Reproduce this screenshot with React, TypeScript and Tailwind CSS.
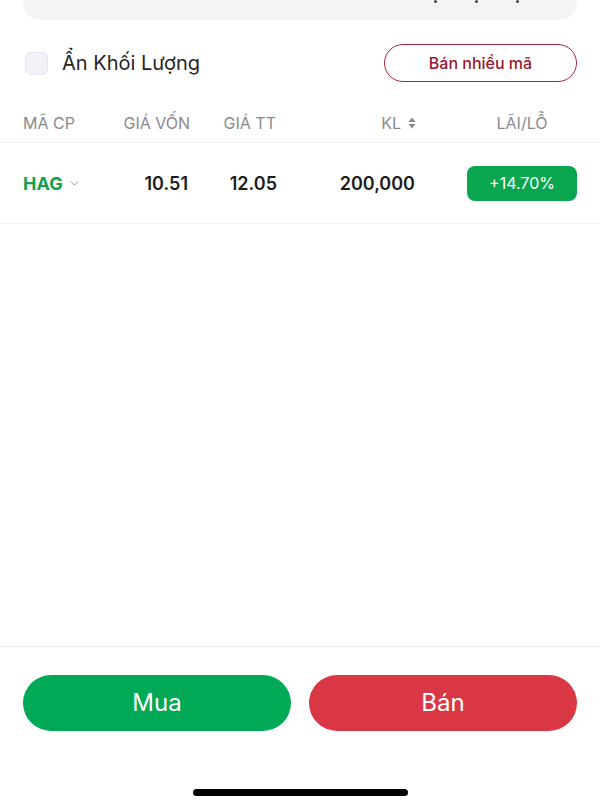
import { ChevronDown } from "lucide-react";

const cols = "grid grid-cols-[97px_70px_87px_143px_1fr_110px]";

export default function App() {
  return (
    <div className="w-[600px] h-[800px] bg-white flex flex-col overflow-hidden font-['Inter',sans-serif] text-[#1c1c1e]">
      {/* summary card, scrolled mostly off the top */}
      <div className="mx-[23px] -mt-[30px] h-[50px] rounded-b-[18px] bg-[#f4f4f6] flex justify-end items-start gap-[38px] pr-[58px] pt-[30px]">
        <span className="w-[3px] h-[3px] rounded-full bg-[#444]" />
        <span className="w-[3px] h-[3px] rounded-full bg-[#444]" />
        <span className="w-[3px] h-[3px] rounded-full bg-[#444]" />
      </div>

      {/* hide volume + sell many */}
      <div className="mt-[24px] px-[23px] flex items-center justify-between">
        <label className="flex items-center gap-[14px] ml-[2px]">
          <span className="w-[23px] h-[23px] rounded-[6px] bg-[#f1f1f8] border border-[#e4e4ec]" />
          <span className="text-[20px] text-[#262626]">Ẩn Khối Lượng</span>
        </label>
        <button className="w-[193px] h-[38px] rounded-full border-[1.5px] border-[#a3283c] text-[#94192d] text-[16px] font-medium">
          Bán nhiều mã
        </button>
      </div>

      {/* table header */}
      <div className={`${cols} items-end px-[23px] h-[61px] pb-[7px] text-[16px] text-[#8a8a8e] border-b border-[#f0f0f2]`}>
        <span>MÃ CP</span>
        <span className="text-right">GIÁ VỐN</span>
        <span className="text-right pr-[1px]">GIÁ TT</span>
        <span className="flex items-center justify-end gap-[7px] pr-[4px]">
          KL
          <svg width="8" height="12" viewBox="0 0 8 12" fill="#8a8a8e">
            <path d="M4 0.5 7.5 5H0.5Z" />
            <path d="M4 11.5 7.5 7H0.5Z" />
          </svg>
        </span>
        <span />
        <span className="text-center">LÃI/LỖ</span>
      </div>

      {/* row */}
      <div className={`${cols} items-center px-[23px] h-[81px] border-b border-[#f3f3f5]`}>
        <span className="flex items-center gap-[5px] text-[18px] font-bold text-[#12a150]">
          HAG
          <ChevronDown size={13} strokeWidth={1.6} className="text-[#8a8a8e] mt-[1px]" />
        </span>
        <span className="text-right text-[18px] font-semibold pr-[2px]">10.51</span>
        <span className="text-right text-[18px] font-semibold">12.05</span>
        <span className="text-right text-[18px] font-semibold pr-[5px]">200,000</span>
        <span />
        <span className="h-[35px] rounded-[8px] bg-[#0aa64f] text-white text-[16px] flex items-center justify-center">
          +14.70%
        </span>
      </div>

      <div className="flex-1" />

      {/* actions */}
      <div className="border-t border-[#ececee] px-[23px] pt-[28px] flex gap-[18px]">
        <button className="flex-1 h-[56px] rounded-full bg-[#00a955] text-white text-[24px]">Mua</button>
        <button className="flex-1 h-[56px] rounded-full bg-[#d93743] text-white text-[24px]">Bán</button>
      </div>
      <div className="h-[69px] flex items-end justify-center pb-[4px]">
        <span className="w-[215px] h-[7px] rounded-full bg-black" />
      </div>
    </div>
  );
}
